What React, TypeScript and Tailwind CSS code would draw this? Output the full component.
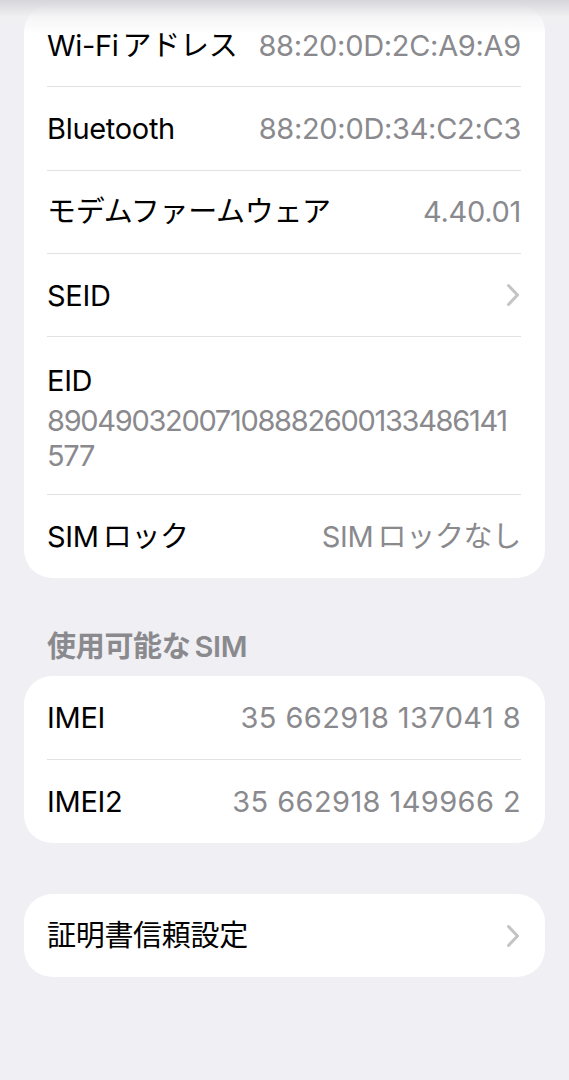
import { ReactNode } from "react";

const font = {
  fontFamily: '"Inter", "Noto Sans CJK JP", sans-serif',
};

function Chevron() {
  return (
    <svg width="14" height="24" viewBox="0 0 14 24" fill="none" className="shrink-0 mr-[1px]">
      <path d="M2.5 2.5 L11.5 12 L2.5 21.5" stroke="#c4c4c7" strokeWidth="3" strokeLinecap="round" strokeLinejoin="round" />
    </svg>
  );
}

function Row({ label, value, last, chevron, wide }: { label: ReactNode; value?: ReactNode; last?: boolean; chevron?: boolean; wide?: boolean }) {
  return (
    <div className={`flex items-center justify-between h-[83.3px] ${last ? "" : "border-b border-[#e2e2e5]"}`}>
      <span className="text-black">{label}</span>
      {value && <span className={`text-[#8a8a8e] ${wide ? "tracking-[0.4px]" : ""}`}>{value}</span>}
      {chevron && <Chevron />}
    </div>
  );
}

function Card({ children, className = "" }: { children: ReactNode; className?: string }) {
  return <div className={`bg-white rounded-[28px] pl-[23px] pr-[24px] ${className}`}>{children}</div>;
}

// small gap iOS puts between latin and kana
function Gap() {
  return <span className="inline-block w-[4px]" />;
}

export default function App() {
  return (
    <div className="relative min-h-[1080px] w-[569px] bg-[#efeff4] overflow-hidden text-[29px] leading-none tracking-[-0.3px]" style={font}>
      {/* nav bar blur edge */}
      <div className="absolute inset-x-0 top-0 h-[34px] bg-gradient-to-b from-[#d6d6db] via-[#f1f1f3]/70 to-transparent pointer-events-none" />

      <div className="px-[24px] pt-[4px]">
        <Card>
          <Row label={<>Wi-Fi<Gap />アドレス</>} value="88:20:0D:2C:A9:A9" />
          <Row label="Bluetooth" value="88:20:0D:34:C2:C3" />
          <Row label="モデムファームウェア" value="4.40.01" />
          <Row label="SEID" chevron />
          <div className="border-b border-[#e2e2e5] pt-[28.5px] pb-[21.5px]">
            <div className="text-black">EID</div>
            <div className="text-[#8a8a8e] mt-[8px] leading-[35px] tracking-[-1.3px]">
              89049032007108882600133486141
              <br />
              577
            </div>
          </div>
          <Row label={<>SIM<Gap />ロック</>} value={<>SIM<Gap />ロックなし</>} last />
        </Card>

        <div className="pl-[23px] pt-[53.5px] pb-[15.5px] font-semibold text-[#8a8a8e]">
          使用可能な<Gap />SIM
        </div>

        <Card>
          <Row label="IMEI" value="35 662918 137041 8" wide />
          <Row label="IMEI2" value="35 662918 149966 2" wide last />
        </Card>

        <Card className="mt-[51px]">
          <Row label="証明書信頼設定" chevron last />
        </Card>
      </div>
    </div>
  );
}
